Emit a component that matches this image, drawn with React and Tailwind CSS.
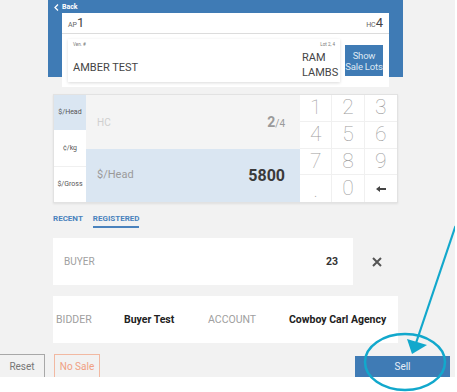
import React from "react";

const font = { fontFamily: "Roboto, 'Liberation Sans', sans-serif" };

export default function App() {
  const keys = ["1", "2", "3", "4", "5", "6", "7", "8", "9", ".", "0", "←"];
  return (
    <div
      className="relative w-[457px] h-[392px] overflow-hidden bg-[#f2f2f2] flex flex-col"
      style={font}
    >
      {/* Top blue band */}
      <div className="ml-[48px] w-[355px] h-[77px] shrink-0 bg-[#3f7bb5] pt-[3px]">
        <div className="flex items-center gap-[3px] pl-[6px] h-[9px] text-[7px] font-bold text-white leading-none">
          <svg width="5" height="7" viewBox="0 0 5 7">
            <path d="M4 0.5 L1 3.5 L4 6.5" stroke="white" strokeWidth="1.3" fill="none" />
          </svg>
          <span>Back</span>
        </div>
        <div className="mt-[1px] ml-[14px] w-[327px] bg-white">
          <div className="h-[21px] border-b border-[#dcdcdc] flex items-center justify-between px-[6px] text-[#444]">
            <div className="flex items-baseline">
              <span className="text-[7px] text-[#666]">AP</span>
              <span className="text-[13px] leading-none">1</span>
            </div>
            <div className="flex items-baseline">
              <span className="text-[7px] text-[#666]">HC</span>
              <span className="text-[13px] leading-none">4</span>
            </div>
          </div>
          <div className="flex items-center gap-[5px] px-[6px] py-[5px]">
            <div className="w-[272px] h-[43px] bg-white shadow-[0_1px_3px_rgba(0,0,0,0.15)] flex flex-col px-[5px] pt-[4px]">
              <div className="flex justify-between text-[4.5px] text-[#777] leading-none">
                <span>Ven. #</span>
                <span>Lot 2, 4</span>
              </div>
              <div className="flex items-center justify-between flex-1 text-[11px] text-[#444]">
                <span className="mt-[6px]">AMBER TEST</span>
                <span className="leading-[15px] w-[34px] mt-[1px] mr-[-1px]">
                  RAM
                  <br />
                  LAMBS
                </span>
              </div>
            </div>
            <div className="w-[38px] h-[31px] bg-[#3f7bb5] text-[#dde8f3] text-[9.5px] leading-[11px] flex flex-col items-center justify-center text-center whitespace-nowrap tracking-[-0.2px]">
              <span>Show</span>
              <span>Sale Lots</span>
            </div>
          </div>
        </div>
      </div>

      {/* Entry panel */}
      <div className="mt-[17px] ml-[53px] w-[345px] h-[109px] shrink-0 bg-white border border-[#e2e2e2] shadow-[0_1px_2px_rgba(0,0,0,0.08)] flex">
        <div className="w-[32px] flex flex-col text-[7px] text-[#555]">
          <div className="flex-1 bg-[#dae6f2] flex items-center justify-center">$/Head</div>
          <div className="flex-1 flex items-center justify-center border-b border-[#f0f0f0]">¢/kg</div>
          <div className="flex-1 flex items-center justify-center">$/Gross</div>
        </div>
        <div className="w-[214px] flex flex-col">
          <div className="h-[54px] bg-[#f4f4f4] flex items-center justify-between px-[11px]">
            <span className="text-[10px] text-[#cfcfcf]">HC</span>
            <span className="text-[#9a9a9a] mr-[4px]">
              <span className="text-[14px] font-bold">2</span>
              <span className="text-[10px]">/4</span>
            </span>
          </div>
          <div className="flex-1 bg-[#dae6f2] flex items-center justify-between px-[11px]">
            <span className="text-[11px] text-[#9a9a9a]">$/Head</span>
            <span className="text-[16px] font-bold text-[#3a3a3a] mr-[4px]">5800</span>
          </div>
        </div>
        <div className="flex-1 grid grid-cols-3 grid-rows-4">
          {keys.map((k, i) => (
            <div
              key={i}
              className={
                "flex items-center justify-center border-[#f0f0f0] " +
                (i % 3 !== 2 ? "border-r " : "") +
                (i < 9 ? "border-b " : "")
              }
            >
              {k === "←" ? (
                <svg width="10" height="6" viewBox="0 0 10 6">
                  <path d="M0 3 L4 0 L4 2 L10 2 L10 4 L4 4 L4 6 Z" fill="#444" />
                </svg>
              ) : k === "." ? (
                <span className="text-[10px] text-[#aaa] mt-[10px]">.</span>
              ) : (
                <span className="text-[21px] font-thin text-[#9c9c9c] leading-none">{k}</span>
              )}
            </div>
          ))}
        </div>
      </div>

      {/* Tabs */}
      <div className="mt-[10px] ml-[53px] flex gap-[10px] text-[8px] font-bold text-[#4a82bd] leading-none">
        <span className="pt-[2px]">RECENT</span>
        <span className="pt-[2px] pb-[3px] border-b-2 border-[#4a82bd]">REGISTERED</span>
      </div>

      {/* Buyer */}
      <div className="mt-[10px] ml-[53px] flex items-center">
        <div className="w-[300px] h-[47px] bg-white flex items-center justify-between pl-[11px] pr-[15px]">
          <span className="text-[10px] text-[#a0a0a0]">BUYER</span>
          <span className="text-[10.5px] font-bold text-[#333]">23</span>
        </div>
        <svg className="ml-[19px]" width="10" height="10" viewBox="0 0 10 10">
          <path d="M1 1 L9 9 M9 1 L1 9" stroke="#555" strokeWidth="2" />
        </svg>
      </div>

      {/* Bidder */}
      <div className="mt-[11px] ml-[53px] w-[345px] h-[47px] bg-white flex items-center pl-[3px] text-[10.5px] whitespace-nowrap">
        <span className="w-[68px] text-[#a0a0a0]">BIDDER</span>
        <span className="w-[84px] font-bold text-[#222]">Buyer Test</span>
        <span className="w-[81px] text-[#a0a0a0]">ACCOUNT</span>
        <span className="font-bold text-[#222]">Cowboy Carl Agency</span>
      </div>

      {/* Bottom actions */}
      <div className="mt-[11px] h-[23px] flex items-start shrink-0">
        <div className="-ml-px w-[46px] h-[23px] border-t border-x border-[#a8a8a8] flex items-center justify-center text-[10px] text-[#777]">
          Reset
        </div>
        <div className="ml-[9px] w-[46px] h-[23px] border-t border-x border-[#f2b9a2] flex items-center justify-center text-[10px] text-[#f0a082]">
          No Sale
        </div>
        <div className="ml-auto mr-[7px] mt-[2px] w-[95px] h-[21px] bg-[#3f7bb5] flex items-center justify-center text-[10px] text-[#e6eef7]">
          Sell
        </div>
      </div>
      <div className="flex-1 bg-white" />

      {/* Annotation overlay */}
      <svg
        className="absolute inset-0 pointer-events-none"
        width="457"
        height="392"
        viewBox="0 0 457 392"
      >
        <line x1="455.5" y1="226" x2="416" y2="343" stroke="#12a8cc" strokeWidth="2.2" />
        <path d="M412 354 L407 339 L427 345 Z" fill="#12a8cc" />
        <ellipse cx="405" cy="362" rx="40" ry="28" fill="none" stroke="#12a8cc" strokeWidth="2.5" />
      </svg>
      <div className="absolute top-0 right-0 w-[2px] h-full bg-white" />
    </div>
  );
}
